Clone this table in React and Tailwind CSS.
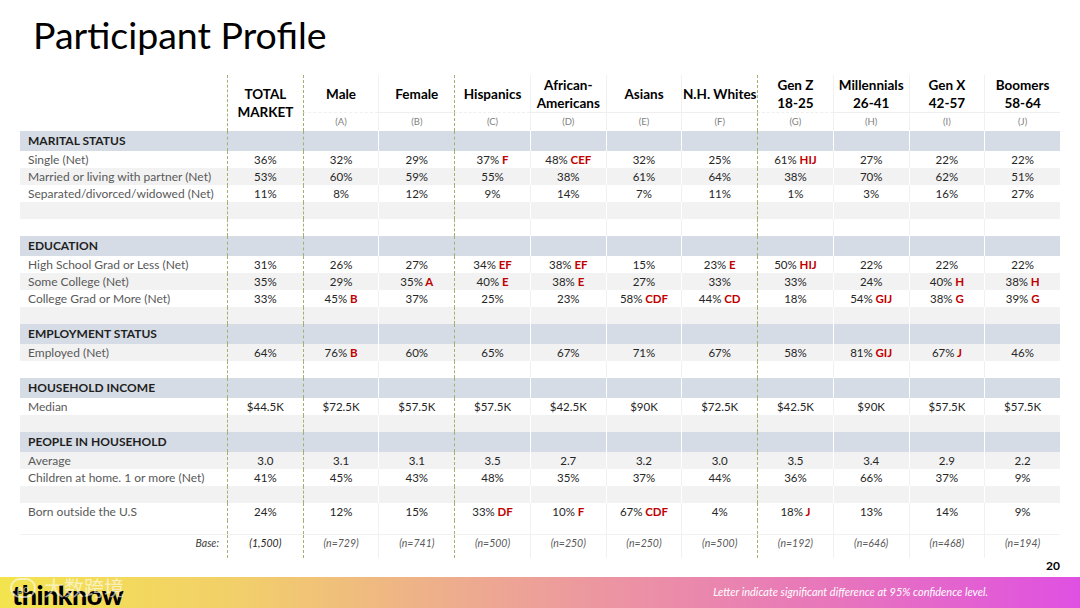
import React from "react";

const COLS = [
  { name: ["TOTAL", "MARKET"], letter: null },
  { name: ["Male"], letter: "(A)" },
  { name: ["Female"], letter: "(B)" },
  { name: ["Hispanics"], letter: "(C)" },
  { name: ["African-", "Americans"], letter: "(D)" },
  { name: ["Asians"], letter: "(E)" },
  { name: ["N.H. Whites"], letter: "(F)" },
  { name: ["Gen Z", "18-25"], letter: "(G)" },
  { name: ["Millennials", "26-41"], letter: "(H)" },
  { name: ["Gen X", "42-57"], letter: "(I)" },
  { name: ["Boomers", "58-64"], letter: "(J)" },
];

const DASH = new Set([0, 1, 3, 7]);

const ROWS = [
  { type: "section", label: "MARITAL STATUS" },
  { type: "data", bg: "w", label: "Single (Net)", v: ["36%", "32%", "29%", "37% F", "48% CEF", "32%", "25%", "61% HIJ", "27%", "22%", "22%"] },
  { type: "data", bg: "g", label: "Married or living with partner (Net)", v: ["53%", "60%", "59%", "55%", "38%", "61%", "64%", "38%", "70%", "62%", "51%"] },
  { type: "data", bg: "w", label: "Separated/divorced/widowed (Net)", v: ["11%", "8%", "12%", "9%", "14%", "7%", "11%", "1%", "3%", "16%", "27%"] },
  { type: "empty", bg: "g" },
  { type: "empty", bg: "w" },
  { type: "section", label: "EDUCATION" },
  { type: "data", bg: "w", label: "High School Grad or Less (Net)", v: ["31%", "26%", "27%", "34% EF", "38% EF", "15%", "23% E", "50% HIJ", "22%", "22%", "22%"] },
  { type: "data", bg: "g", label: "Some College (Net)", v: ["35%", "29%", "35% A", "40% E", "38% E", "27%", "33%", "33%", "24%", "40% H", "38% H"] },
  { type: "data", bg: "w", label: "College Grad or More (Net)", v: ["33%", "45% B", "37%", "25%", "23%", "58% CDF", "44% CD", "18%", "54% GIJ", "38% G", "39% G"] },
  { type: "empty", bg: "g" },
  { type: "section", label: "EMPLOYMENT STATUS" },
  { type: "data", bg: "g", label: "Employed (Net)", v: ["64%", "76% B", "60%", "65%", "67%", "71%", "67%", "58%", "81% GIJ", "67% J", "46%"] },
  { type: "empty", bg: "w" },
  { type: "section", label: "HOUSEHOLD INCOME" },
  { type: "data", bg: "w", label: "Median", v: ["$44.5K", "$72.5K", "$57.5K", "$57.5K", "$42.5K", "$90K", "$72.5K", "$42.5K", "$90K", "$57.5K", "$57.5K"] },
  { type: "empty", bg: "g" },
  { type: "section", label: "PEOPLE IN HOUSEHOLD" },
  { type: "data", bg: "g", label: "Average", v: ["3.0", "3.1", "3.1", "3.5", "2.7", "3.2", "3.0", "3.5", "3.4", "2.9", "2.2"] },
  { type: "data", bg: "w", label: "Children at home. 1 or more (Net)", v: ["41%", "45%", "43%", "48%", "35%", "37%", "44%", "36%", "66%", "37%", "9%"] },
  { type: "empty", bg: "g" },
  { type: "data", bg: "w", label: "Born outside the U.S", v: ["24%", "12%", "15%", "33% DF", "10% F", "67% CDF", "4%", "18% J", "13%", "14%", "9%"] },
];

const BASE = ["(1,500)", "(n=729)", "(n=741)", "(n=500)", "(n=250)", "(n=250)", "(n=500)", "(n=192)", "(n=646)", "(n=468)", "(n=194)"];

const GRID = "grid grid-cols-[207px_repeat(11,minmax(0,1fr))]";

function sep(i, light) {
  if (DASH.has(i)) return "border-l border-dashed border-[#9fb36f]";
  return light ? "border-l border-[#f1f1f1]" : "border-l border-white";
}

function Val({ text }) {
  const [num, sig] = text.split(" ");
  return (
    <span>
      {num}
      {sig && <span className="font-bold text-[#c00000]"> {sig}</span>}
    </span>
  );
}

function Row({ row }) {
  if (row.type === "section") {
    return (
      <div className={`${GRID} h-[20px] bg-[#d6dce5]`}>
        <div className="flex items-center pl-[8px] text-[12px] font-bold text-[#1f1f1f] whitespace-nowrap">{row.label}</div>
        {COLS.map((c, i) => (
          <div key={i} className={sep(i, false)} />
        ))}
      </div>
    );
  }
  const bg = row.bg === "g" ? "bg-[#f2f2f2]" : "bg-white";
  const light = row.bg === "w";
  return (
    <div className={`${GRID} h-[17px] ${bg}`}>
      <div className="flex items-center pl-[8px] text-[12px] text-[#595959] whitespace-nowrap">{row.label || ""}</div>
      {COLS.map((c, i) => (
        <div key={i} className={`${sep(i, light)} flex items-center justify-center text-[11.5px] text-[#262626] whitespace-nowrap`}>
          {row.v ? <Val text={row.v[i]} /> : null}
        </div>
      ))}
    </div>
  );
}

export default function App() {
  return (
    <div
      className="relative w-[1080px] h-[608px] bg-white overflow-hidden flex flex-col"
      style={{ fontFamily: "Lato, 'Noto Sans', 'Noto Sans CJK SC', sans-serif" }}
    >
      <div className="h-[75px] pl-[33px] pt-[12px]">
        <h1 className="text-[37.5px] leading-[46px] text-black font-normal">Participant Profile</h1>
      </div>

      <div className="ml-[20px] w-[1040px]">
        {/* header */}
        <div className={`${GRID} grid-rows-[38px_18px] bg-white`}>
          <div className="row-span-2" />
          {COLS.map((c, i) =>
            c.letter === null ? (
              <div key={i} className={`${sep(i, true)} flex flex-col items-center justify-center text-[13.5px] font-bold leading-[18px] text-black`} style={{ gridColumn: i + 2, gridRow: "1 / span 2" }}>
                {c.name.map((n) => (
                  <div key={n}>{n}</div>
                ))}
              </div>
            ) : (
              <div key={i} className={`${sep(i, true)} flex flex-col items-center justify-center text-[13.5px] font-bold leading-[18px] text-black border-b border-b-[#efefef]`} style={{ gridColumn: i + 2, gridRow: 1 }}>
                {c.name.map((n) => (
                  <div key={n} className="whitespace-nowrap">{n}</div>
                ))}
              </div>
            )
          )}
          {COLS.map((c, i) =>
            c.letter === null ? null : (
              <div key={"l" + i} className={`${sep(i, true)} flex items-center justify-center text-[9.5px] text-[#7f7f7f]`} style={{ gridColumn: i + 2, gridRow: 2 }}>
                {c.letter}
              </div>
            )
          )}
        </div>

        {ROWS.map((r, idx) => (
          <Row key={idx} row={r} />
        ))}

        {/* spacer before base */}
        <div className={`${GRID} h-[14px] bg-white`}>
          <div />
          {COLS.map((c, i) => (
            <div key={i} className={sep(i, true)} />
          ))}
        </div>
        {/* base row */}
        <div className={`${GRID} h-[24px] bg-white border-t border-[#f1f1f1]`}>
          <div className="flex items-start pt-[1px] justify-end pr-[8px] text-[10.5px] leading-[14px] italic text-[#404040]">Base:</div>
          {BASE.map((b, i) => (
            <div key={i} className={`${sep(i, true)} flex items-start pt-[1px] justify-center text-[10.5px] leading-[14px] italic ${i === 0 ? "text-[#262626]" : "text-[#595959]"}`}>
              {b}
            </div>
          ))}
        </div>
      </div>

      <div className="flex justify-end pr-[20px] text-[12px] font-bold text-black leading-[16px]">20</div>

      <div className="mt-auto relative h-[31px] bg-[linear-gradient(90deg,#f3e44e_0%,#f2cf6a_22%,#eeb08a_40%,#ec92a4_58%,#e774bd_78%,#df50e2_100%)] flex items-center">
        <div className="pl-[12px] text-[27px] font-black text-black leading-none tracking-[-0.5px] pt-[4px]">thinknow</div>
        <div className="ml-auto pr-[92px] text-[11px] italic text-white">Letter indicate significant difference at 95% confidence level.</div>
        <div className="absolute left-[10px] top-[-4px] flex items-center gap-[8px] opacity-60">
          <div className="w-[26px] h-[20px] rounded-full border-2 border-white text-[11px] text-white leading-none flex items-center justify-center">ρo</div>
          <div className="text-[20px] text-white" style={{ fontFamily: "'Noto Sans CJK SC', sans-serif" }}>大数跨境</div>
        </div>
      </div>
    </div>
  );
}
